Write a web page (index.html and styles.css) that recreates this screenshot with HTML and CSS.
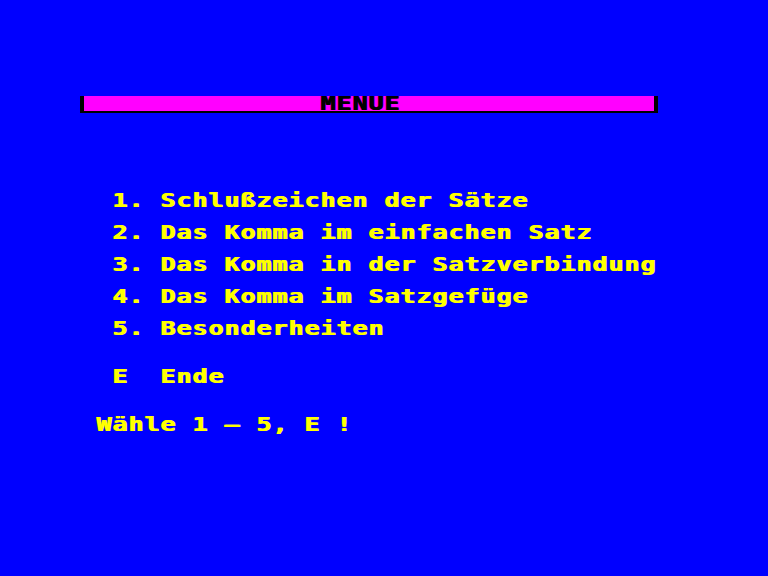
FILE: index.html
```html
<!DOCTYPE html>
<html lang="de">
<head>
    <meta charset="UTF-8">
    <meta name="viewport" content="width=device-width, initial-scale=1.0">
    <title>Menue</title>
    <link rel="stylesheet" href="styles.css">
</head>

<body>
    <div class="screen">
        <header class="titlebar">
            <h1 class="title">MENUE</h1>
        </header>

        <ul class="menu">
            <li>1. Schlußzeichen der Sätze</li>
            <li>2. Das Komma im einfachen Satz</li>
            <li>3. Das Komma in der Satzverbindung</li>
            <li>4. Das Komma im Satzgefüge</li>
            <li>5. Besonderheiten</li>
            <li class="end">E  Ende</li>
        </ul>

        <p class="prompt">Wähle 1 — 5, E !</p>
    </div>
</body>
</html>
```

FILE: styles.css
```css
/* 16px cells, like the old 40 column text mode */
html, body {
    margin          : 0;
    height          : 100%;
    background-color: #0000ff;
    overflow        : hidden;
}

.screen {
    padding         : 96px 0 0 80px;
    font-family     : "DejaVu Sans Mono", "Liberation Mono", monospace;
    font-weight     : bold;
    font-size       : 20px;
    line-height     : 16px;
    color           : #ffff00;
}

/* glyphs stretched wide: 12.8px advance x 1.25 = 16px per cell */
.title, .menu li, .prompt {
    width           : fit-content;
    white-space     : pre;
    letter-spacing  : 0.76px;
    text-shadow     : 1px 0 0 currentColor;
    transform       : scaleX(1.25);
    transform-origin: left center;
}

.titlebar {
    width           : 570px;
    height          : 15px;
    background-color: #ff00ff;
    border-left     : 4px solid #000000;
    border-right    : 4px solid #000000;
    border-bottom   : 2px solid #000000;
}

.title {
    margin          : 0;
    padding-left    : 188.8px;
    font-size       : 20px;
    line-height     : 15px;
    color           : #000000;
}

.menu {
    list-style-type : none;
    margin          : 79px 0 0 0;
    padding         : 0 0 0 32px;
    display         : flex;
    flex-direction  : column;
    align-items     : flex-start;
    gap             : 16px;
}

.menu .end {
    margin-top      : 16px;
}

.prompt {
    margin          : 32px 0 0 16px;
}
```
